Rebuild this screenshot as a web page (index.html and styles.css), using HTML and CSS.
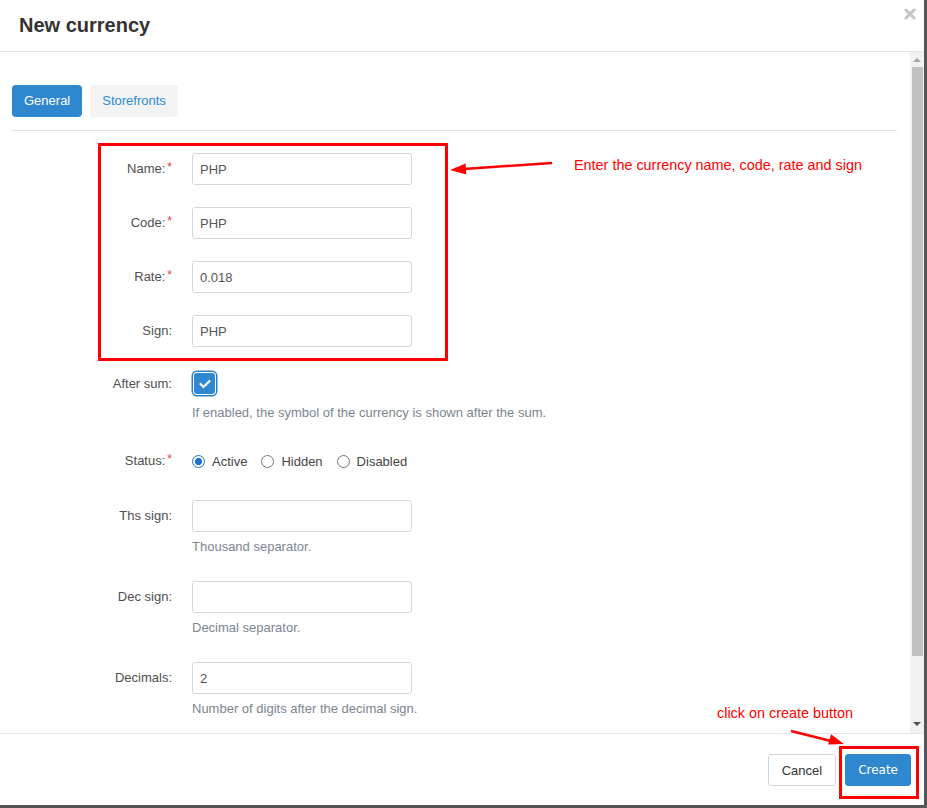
FILE: index.html
```html
<!DOCTYPE html>
<html lang="en">
<head>
    <meta charset="UTF-8">
    <meta name="viewport" content="width=device-width, initial-scale=1.0">
    <title>New currency</title>
    <link rel="stylesheet" href="styles.css">
</head>
<body>
    <div class="modal">
        <div class="modal-header">
            <h3>New currency</h3>
            <span class="close">
                <svg width="12" height="12" viewBox="0 0 12 12"><path d="M2 2 L10 10 M10 2 L2 10" stroke="#c4c4c4" stroke-width="3" stroke-linecap="round"/></svg>
            </span>
        </div>

        <div class="modal-body">
            <div class="content">
                <div class="tabs">
                    <a class="tab active">General</a>
                    <a class="tab">Storefronts</a>
                </div>

                <div class="form">
                    <div class="row">
                        <label class="label">Name:<span class="req">*</span></label>
                        <div class="controls"><input class="input" value="PHP"></div>
                    </div>
                    <div class="row">
                        <label class="label">Code:<span class="req">*</span></label>
                        <div class="controls"><input class="input" value="PHP"></div>
                    </div>
                    <div class="row">
                        <label class="label">Rate:<span class="req">*</span></label>
                        <div class="controls"><input class="input" value="0.018"></div>
                    </div>
                    <div class="row">
                        <label class="label">Sign:</label>
                        <div class="controls"><input class="input" value="PHP"></div>
                    </div>
                    <div class="row with-help after-sum">
                        <label class="label">After sum:</label>
                        <div class="controls">
                            <div class="check-line">
                                <span class="checkbox">
                                    <svg width="12" height="10" viewBox="0 0 12 10"><path d="M1.5 5 L4.5 8 L10.5 2" fill="none" stroke="#fff" stroke-width="2.2" stroke-linecap="round" stroke-linejoin="round"/></svg>
                                </span>
                            </div>
                            <p class="help">If enabled, the symbol of the currency is shown after the sum.</p>
                        </div>
                    </div>
                    <div class="row status">
                        <label class="label">Status:<span class="req">*</span></label>
                        <div class="controls radios">
                            <label class="radio-item"><span class="radio checked"></span>Active</label>
                            <label class="radio-item"><span class="radio"></span>Hidden</label>
                            <label class="radio-item"><span class="radio"></span>Disabled</label>
                        </div>
                    </div>
                    <div class="row with-help">
                        <label class="label">Ths sign:</label>
                        <div class="controls">
                            <input class="input" value="">
                            <p class="help">Thousand separator.</p>
                        </div>
                    </div>
                    <div class="row with-help">
                        <label class="label">Dec sign:</label>
                        <div class="controls">
                            <input class="input" value="">
                            <p class="help">Decimal separator.</p>
                        </div>
                    </div>
                    <div class="row with-help">
                        <label class="label">Decimals:</label>
                        <div class="controls">
                            <input class="input" value="2">
                            <p class="help">Number of digits after the decimal sign.</p>
                        </div>
                    </div>
                </div>
            </div>

            <div class="scrollbar">
                <span class="arrow up"></span>
                <div class="track"><div class="thumb"></div></div>
                <span class="arrow down"></span>
            </div>
        </div>

        <div class="modal-footer">
            <button class="btn">Cancel</button>
            <button class="btn btn-primary">Create</button>
        </div>

        <!-- tutorial annotations drawn over the dialog -->
        <svg class="marks" width="924" height="805" viewBox="0 0 924 805">
            <rect x="99.5" y="144.5" width="347" height="215" fill="none" stroke="#ff0000" stroke-width="3"/>
            <line x1="552" y1="163" x2="464" y2="169" stroke="#ff0000" stroke-width="2.5"/>
            <polygon points="450,170 466.3,174.5 465.6,163.5" fill="#ff0000"/>
            <rect x="840.5" y="747.5" width="77" height="50" fill="none" stroke="#ff0000" stroke-width="3"/>
            <line x1="791" y1="731" x2="831" y2="741" stroke="#ff0000" stroke-width="2.5"/>
            <polygon points="844,744 828.1,744.4 831.1,734.3" fill="#ff0000"/>
        </svg>
        <span class="note note-fields">Enter the currency name, code, rate and sign</span>
        <span class="note note-create">click on create button</span>
    </div>
</body>
</html>
```

FILE: styles.css
```css
body {
    margin: 0;
    background: #555;
    font-family: "Liberation Sans", Arial, sans-serif;
}
.modal {
    position: relative;
    width: 924px;
    height: 805px;
    background: #fff;
    display: flex;
    flex-direction: column;
}
.modal-header {
    height: 51px;
    border-bottom: 1px solid #e5e5e5;
    display: flex;
    justify-content: space-between;
    align-items: flex-start;
    padding: 0 8px 0 19px;
}
.modal-header h3 {
    margin: 0;
    line-height: 51px;
    font-size: 20px;
    font-weight: bold;
    color: #333;
}
.close {
    margin-top: 8px;
    line-height: 0;
}
.modal-body {
    height: 681px;
    display: flex;
}
.content {
    flex: 1;
    padding: 33px 13px 0 12px;
    overflow: hidden;
}
.tabs {
    display: flex;
    gap: 8px;
    padding-bottom: 13px;
    border-bottom: 1px solid #dfe5eb;
}
.tab {
    height: 32px;
    line-height: 32px;
    padding: 0 12px;
    border-radius: 4px;
    font-size: 13px;
    background: #f3f3f3;
    color: #2b8ad4;
}
.tab.active {
    background: #2f87cf;
    color: #fff;
}
.form {
    padding-top: 22px;
}
.row {
    display: grid;
    grid-template-columns: 160px 1fr;
    column-gap: 20px;
    align-items: start;
    margin-bottom: 22px;
}
.row.with-help {
    margin-bottom: 25px;
}
.row.after-sum {
    margin-bottom: 23px;
}
.row.status {
    min-height: 33px;
}
.label {
    text-align: right;
    font-size: 13px;
    color: #4f4f4f;
    height: 32px;
    line-height: 32px;
}
.req {
    color: #e8383d;
    font-size: 12px;
    line-height: 0;
    margin-left: 2px;
    vertical-align: 2px;
}
.input {
    display: block;
    box-sizing: border-box;
    width: 220px;
    height: 32px;
    border: 1px solid #cfd7df;
    border-radius: 3px;
    padding: 0 7px;
    font-family: inherit;
    font-size: 13px;
    color: #555;
    margin: 0;
}
.help {
    margin: 6px 0 0;
    font-size: 13px;
    line-height: 18px;
    color: #7b8591;
}
.after-sum .help {
    margin-top: 6px;
}
.after-sum .label {
    height: 29px;
    line-height: 30px;
}
.check-line {
    height: 29px;
    display: flex;
    align-items: center;
}
.checkbox {
    width: 21px;
    height: 21px;
    margin-left: 2px;
    box-sizing: border-box;
    border-radius: 3px;
    background: #2f87cf;
    box-shadow: 0 0 0 1px #fff, 0 0 0 2.5px #2a7fc7;
    display: flex;
    align-items: center;
    justify-content: center;
}
.radios {
    display: flex;
    align-items: center;
    gap: 14px;
    height: 32px;
}
.radio-item {
    display: flex;
    align-items: center;
    font-size: 13px;
    color: #444;
}
.radio {
    width: 13px;
    height: 13px;
    box-sizing: border-box;
    border: 1px solid #767676;
    border-radius: 50%;
    margin-right: 7px;
}
.radio.checked {
    border: 1.5px solid #1f6fd6;
    background: radial-gradient(circle, #1f6fd6 0 3.3px, #fff 3.8px);
}
.scrollbar {
    width: 14px;
    background: #f1f1f1;
    display: flex;
    flex-direction: column;
    align-items: center;
}
.arrow {
    width: 0;
    height: 0;
    border-left: 4px solid transparent;
    border-right: 4px solid transparent;
}
.arrow.up {
    margin: 6px 0 5px;
    border-bottom: 4px solid #a3a3a3;
}
.arrow.down {
    margin: 5px 0 7px;
    border-top: 4px solid #505050;
}
.track {
    flex: 1;
    width: 100%;
}
.thumb {
    margin: 0 1px 0 2px;
    height: 589px;
    background: #c1c1c1;
}
.modal-footer {
    border-top: 1px solid #e5e5e5;
    padding: 20px 13px 19px;
    display: flex;
    justify-content: flex-end;
    gap: 9px;
}
.btn {
    height: 32px;
    padding: 0 13px;
    border: 1px solid #cdd6de;
    border-radius: 3px;
    background: #fff;
    font-family: inherit;
    font-size: 13px;
    color: #333;
}
.btn-primary {
    padding: 0 12px;
    border-color: #2f87cf;
    background: #2f87cf;
    color: #fff;
    font-family: "DejaVu Sans", sans-serif;
    font-size: 12px;
}
.marks {
    position: absolute;
    top: 0;
    left: 0;
    pointer-events: none;
}
.note {
    position: absolute;
    font-size: 14.4px;
    color: #ff0000;
    white-space: nowrap;
}
.note-fields {
    left: 574px;
    top: 157px;
}
.note-create {
    left: 717px;
    top: 705px;
}
```
